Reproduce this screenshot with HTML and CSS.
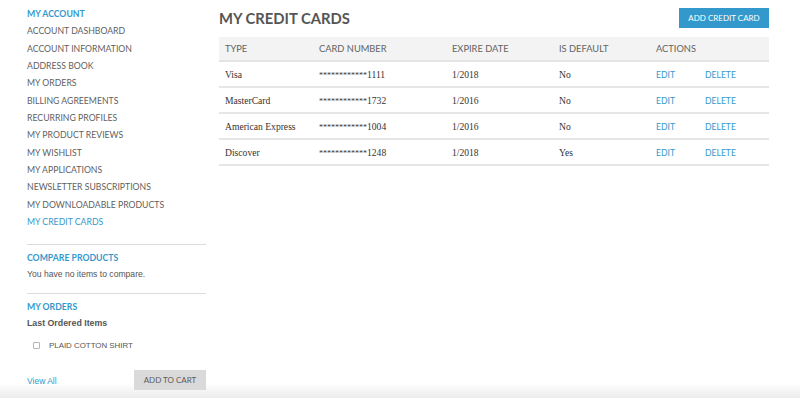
FILE: index.html
```html
<!DOCTYPE html>
<html>
<head>
<meta charset="utf-8">
<link rel="stylesheet" href="styles.css">
</head>
<body>
<div class="page">
  <aside class="sidebar">
    <ul class="nav">
      <li class="nav-title">MY ACCOUNT</li>
      <li>ACCOUNT DASHBOARD</li>
      <li>ACCOUNT INFORMATION</li>
      <li>ADDRESS BOOK</li>
      <li>MY ORDERS</li>
      <li>BILLING AGREEMENTS</li>
      <li>RECURRING PROFILES</li>
      <li>MY PRODUCT REVIEWS</li>
      <li>MY WISHLIST</li>
      <li>MY APPLICATIONS</li>
      <li>NEWSLETTER SUBSCRIPTIONS</li>
      <li>MY DOWNLOADABLE PRODUCTS</li>
      <li class="nav-active">MY CREDIT CARDS</li>
    </ul>
    <section class="block compare">
      <div class="block-title">COMPARE PRODUCTS</div>
      <p class="block-text">You have no items to compare.</p>
    </section>
    <section class="block orders">
      <div class="block-title">MY ORDERS</div>
      <div class="block-sub">Last Ordered Items</div>
      <label class="item-row"><span class="checkbox"></span><span class="item-name">PLAID COTTON SHIRT</span></label>
      <div class="block-actions">
        <a class="view-all">View All</a>
        <button class="btn-grey">ADD TO CART</button>
      </div>
    </section>
  </aside>
  <main class="main">
    <div class="main-head">
      <h1 class="page-title">MY CREDIT CARDS</h1>
      <button class="btn-blue">ADD CREDIT CARD</button>
    </div>
    <table class="cards">
      <thead>
        <tr><th class="c1">TYPE</th><th class="c2">CARD NUMBER</th><th class="c3">EXPIRE DATE</th><th class="c4">IS DEFAULT</th><th class="c5">ACTIONS</th></tr>
      </thead>
      <tbody>
        <tr><td>Visa</td><td><span class="mask">************</span>1111</td><td>1/2018</td><td>No</td><td class="actions"><a class="act">EDIT</a><a class="act">DELETE</a></td></tr>
        <tr><td>MasterCard</td><td><span class="mask">************</span>1732</td><td>1/2016</td><td>No</td><td class="actions"><a class="act">EDIT</a><a class="act">DELETE</a></td></tr>
        <tr><td>American Express</td><td><span class="mask">************</span>1004</td><td>1/2016</td><td>No</td><td class="actions"><a class="act">EDIT</a><a class="act">DELETE</a></td></tr>
        <tr><td>Discover</td><td><span class="mask">************</span>1248</td><td>1/2018</td><td>Yes</td><td class="actions"><a class="act">EDIT</a><a class="act">DELETE</a></td></tr>
      </tbody>
    </table>
  </main>
</div>
</body>
</html>
```
FILE: styles.css
```css
* { box-sizing: border-box; }
body {
  margin: 0;
  font-family: Lato, "Open Sans", sans-serif;
  color: #636363;
}
.page {
  display: flex;
  gap: 13px;
  padding-left: 27px;
  height: 398px;
  background: linear-gradient(to bottom, #fff 0, #fff 383px, #ececec 398px);
}
.sidebar { width: 179px; }
.nav {
  list-style: none;
  margin: 0;
  padding: 5px 0 0;
}
.nav li {
  font-size: 8.7px;
  line-height: 17.33px;
  color: #5f5f5f;
  white-space: nowrap;
}
.nav .nav-title, .nav .nav-active { color: #3399cc; }
.nav .nav-title { font-weight: 700; }
.block { border-top: 1px solid #dcdcdc; }
.compare { margin-top: 14px; padding-top: 4px; padding-bottom: 11px; }
.orders { padding-top: 4px; }
.block-title {
  font-size: 8.7px;
  line-height: 17px;
  font-weight: 700;
  color: #3399cc;
}
.block-text {
  margin: 0;
  font-family: "Liberation Sans", Arial, sans-serif;
  font-size: 8.6px;
  line-height: 16px;
  color: #555;
}
.block-sub {
  font-family: "Liberation Sans", Arial, sans-serif;
  font-size: 8.8px;
  line-height: 16px;
  font-weight: 700;
  color: #555;
}
.item-row {
  display: flex;
  align-items: center;
  margin-top: 6px;
  height: 16px;
  padding-left: 6px;
}
.checkbox {
  width: 7px;
  height: 7px;
  border: 1px solid #b5b5b5;
  border-radius: 1px;
  background: #fff;
  margin-right: 9px;
}
.item-name {
  font-family: "Liberation Sans", Arial, sans-serif;
  font-size: 7.9px;
  color: #555;
}
.block-actions {
  display: flex;
  justify-content: space-between;
  align-items: center;
  margin-top: 17px;
}
.view-all {
  font-family: "Liberation Sans", Arial, sans-serif;
  font-size: 8.5px;
  color: #3399cc;
  padding-top: 2px;
}
.btn-grey {
  width: 72px;
  height: 20px;
  border: 0;
  background: #dadada;
  color: #5a5a5a;
  font-family: Lato, sans-serif;
  font-size: 8px;
  padding: 0;
}
.main { width: 550px; }
.main-head {
  display: flex;
  justify-content: space-between;
  align-items: center;
  padding-top: 8px;
  height: 28px;
}
.page-title {
  margin: 0;
  font-size: 14.8px;
  line-height: 20px;
  font-weight: 700;
  color: #555;
}
.btn-blue {
  width: 90px;
  height: 20px;
  border: 0;
  background: #3399cc;
  color: #fff;
  font-family: Lato, sans-serif;
  font-size: 8px;
  padding: 0;
}
.cards {
  margin-top: 9px;
  width: 550px;
  border-collapse: collapse;
  table-layout: fixed;
}
.cards th {
  background: #f3f3f3;
  height: 24px;
  text-align: left;
  font-weight: 400;
  font-size: 9.3px;
  color: #636363;
  padding: 0 0 0 6px;
  border-bottom: 2px solid #e4e4e4;
}
.c1 { width: 94px; }
.c2 { width: 133px; }
.c3 { width: 107px; }
.c4 { width: 97px; }
.cards td {
  height: 26px;
  padding: 0 0 0 6px;
  border-bottom: 2px solid #e6e6e6;
  font-family: "Liberation Serif", Georgia, serif;
  font-size: 9.6px;
  color: #333;
}
.mask { font-size: 8px; }
.cards td.actions { font-family: Lato, sans-serif; }
.act {
  display: inline-block;
  font-size: 8.6px;
  color: #3399cc;
}
.act:first-child { width: 49px; }
```
